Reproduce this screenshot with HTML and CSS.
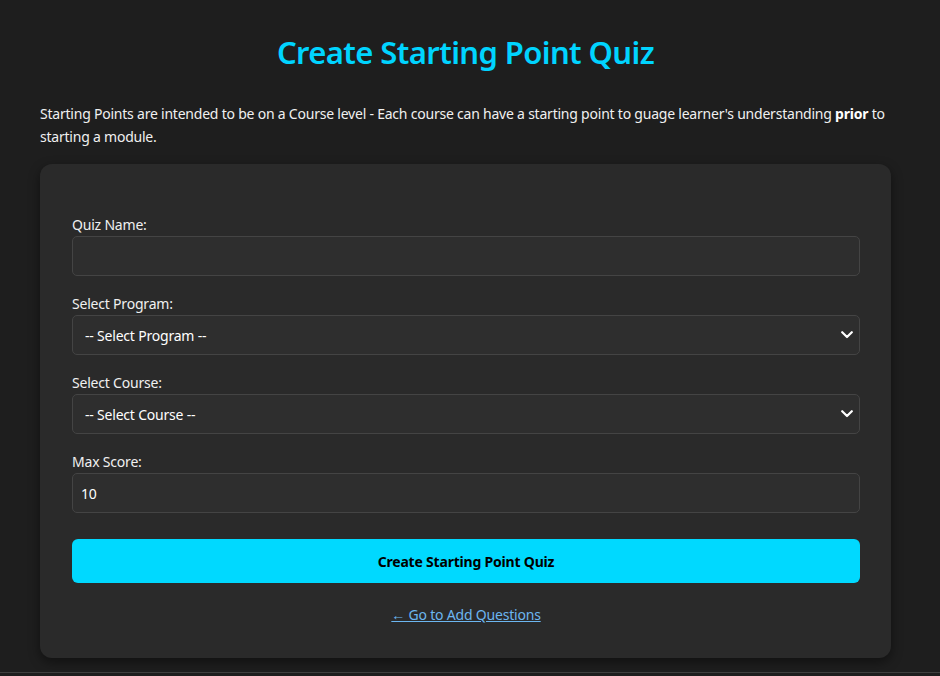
FILE: index.html
```html
<!DOCTYPE html>
<html lang="en">
<head>
<meta charset="utf-8">
<title>Create Starting Point Quiz</title>
<link rel="stylesheet" href="styles.css">
</head>
<body>
<main class="page">
  <h1 class="title">Create Starting Point Quiz</h1>
  <p class="intro">Starting Points are intended to be on a Course level - Each course can have a starting point to guage learner's understanding <strong>prior</strong> to starting a module.</p>
  <section class="card">
    <form class="form">
      <div class="field">
        <label class="label" for="quiz-name">Quiz Name:</label>
        <input class="control" id="quiz-name" type="text">
      </div>
      <div class="field">
        <label class="label" for="program">Select Program:</label>
        <div class="select-wrap">
          <select class="control select" id="program">
            <option>-- Select Program --</option>
          </select>
          <svg class="chevron" viewBox="0 0 12 8" width="12" height="8"><path d="M1.2 1.2 L6 6 L10.8 1.2" fill="none" stroke="#fff" stroke-width="2.2" stroke-linecap="round" stroke-linejoin="round"/></svg>
        </div>
      </div>
      <div class="field">
        <label class="label" for="course">Select Course:</label>
        <div class="select-wrap">
          <select class="control select" id="course">
            <option>-- Select Course --</option>
          </select>
          <svg class="chevron" viewBox="0 0 12 8" width="12" height="8"><path d="M1.2 1.2 L6 6 L10.8 1.2" fill="none" stroke="#fff" stroke-width="2.2" stroke-linecap="round" stroke-linejoin="round"/></svg>
        </div>
      </div>
      <div class="field">
        <label class="label" for="max-score">Max Score:</label>
        <input class="control" id="max-score" type="number" value="10">
      </div>
      <button class="submit" type="button">Create Starting Point Quiz</button>
      <div class="link-row"><a class="back-link" href="#">← Go to Add Questions</a></div>
    </form>
  </section>
</main>
<footer class="footer"></footer>
</body>
</html>
```
FILE: styles.css
```css
html, body {
  margin: 0;
  padding: 0;
  background: #1e1e1e;
  color: #ffffff;
  font-family: "Noto Sans", "Open Sans", sans-serif;
  font-size: 14px;
  letter-spacing: -0.2px;
}
.page {
  width: 851px;
  margin-left: 40px;
  padding-top: 29px;
}
.title {
  margin: 0;
  text-align: center;
  color: #00d4ff;
  font-size: 31px;
  font-weight: 600;
  line-height: 46px;
  letter-spacing: -0.6px;
}
.intro {
  margin: 27px 0 16px;
  line-height: 23px;
  color: #f0f0f0;
  letter-spacing: -0.22px;
}
.intro strong {
  font-weight: 700;
  color: #ffffff;
}
.card {
  background: #2a2a2a;
  border-radius: 12px;
  box-shadow: 0 4px 12px rgba(0, 0, 0, 0.45);
  padding: 52px 31px 33px 32px;
}
.form {
  display: flex;
  flex-direction: column;
}
.field {
  display: flex;
  flex-direction: column;
  margin-bottom: 19px;
}
.label {
  line-height: 18px;
  margin-bottom: 2px;
  color: #f0f0f0;
}
.control {
  box-sizing: border-box;
  width: 100%;
  height: 40px;
  background: #2e2e2e;
  border: 1px solid #444444;
  border-radius: 5px;
  color: #ffffff;
  font-family: inherit;
  font-size: 14px;
  letter-spacing: -0.2px;
  padding: 0 8px;
  outline: none;
}
.control[type=number] {
  -moz-appearance: textfield;
}
.control::-webkit-inner-spin-button,
.control::-webkit-outer-spin-button {
  -webkit-appearance: none;
  margin: 0;
}
.select-wrap {
  position: relative;
}
.select {
  -webkit-appearance: none;
  appearance: none;
  padding: 0 12px;
}
.chevron {
  position: absolute;
  right: 7px;
  top: 16px;
  pointer-events: none;
}
.submit {
  margin-top: 7px;
  height: 44px;
  border: none;
  border-radius: 6px;
  background: #00d9ff;
  color: #000000;
  font-family: inherit;
  font-size: 14px;
  font-weight: 700;
  letter-spacing: -0.2px;
}
.link-row {
  margin-top: 22px;
  text-align: center;
  line-height: 20px;
}
.back-link {
  color: #6cb6f0;
  text-decoration: underline;
}
.footer {
  margin-top: 14px;
  border-top: 1px solid #3f3f3f;
  height: 3px;
}
```
